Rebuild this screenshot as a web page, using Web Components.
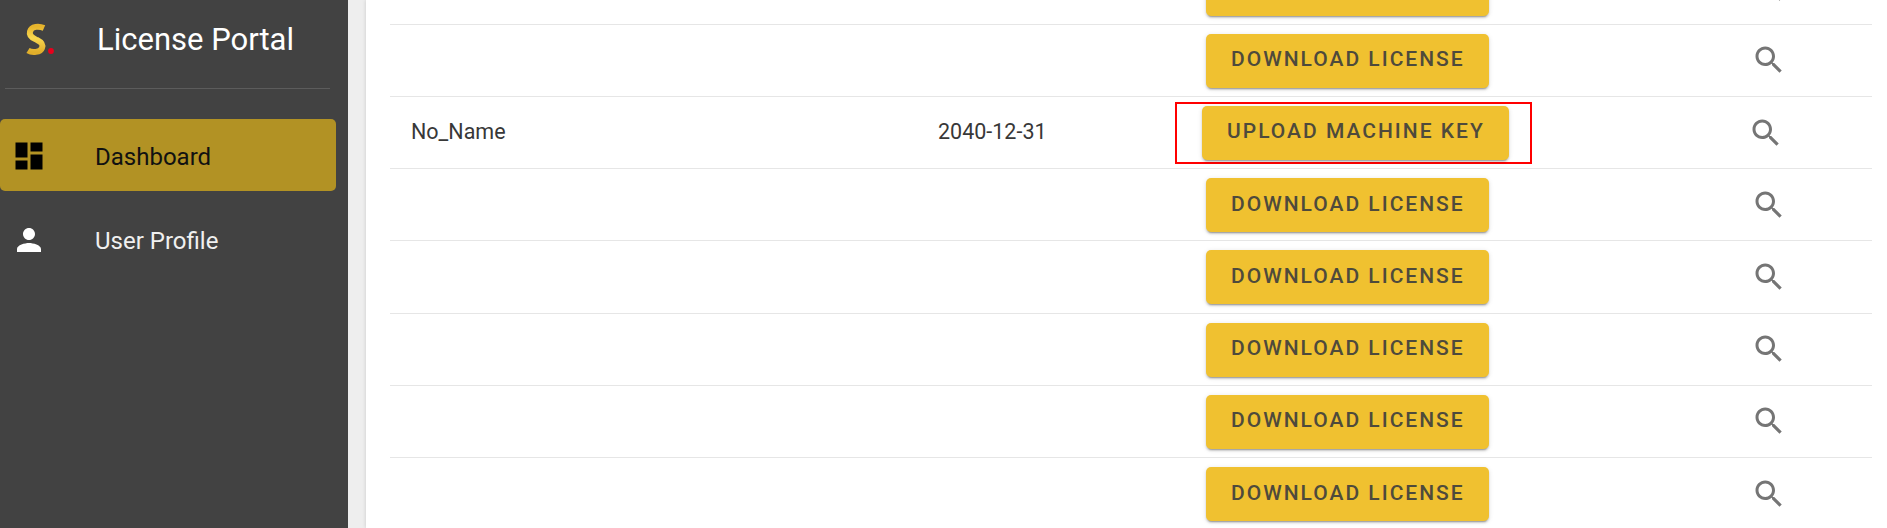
<!DOCTYPE html>
<html>
<head>
<meta charset="utf-8">
<title>License Portal</title>
<style>
  html, body { margin: 0; height: 100%; overflow: hidden; }
  body { font-family: Roboto, "Liberation Sans", sans-serif; background: #eeeeee; }
</style>
</head>
<body>
<license-app>
  <side-bar slot="side">
    <nav-item active label="Dashboard" icon="dashboard"></nav-item>
    <nav-item label="User Profile" icon="person"></nav-item>
  </side-bar>
  <license-row slot="rows" action="DOWNLOAD LICENSE"></license-row>
  <license-row slot="rows" action="DOWNLOAD LICENSE"></license-row>
  <license-row slot="rows" action="UPLOAD MACHINE KEY" name="No_Name" expires="2040-12-31" highlight></license-row>
  <license-row slot="rows" action="DOWNLOAD LICENSE"></license-row>
  <license-row slot="rows" action="DOWNLOAD LICENSE"></license-row>
  <license-row slot="rows" action="DOWNLOAD LICENSE"></license-row>
  <license-row slot="rows" action="DOWNLOAD LICENSE"></license-row>
  <license-row slot="rows" action="DOWNLOAD LICENSE"></license-row>
</license-app>

<script>
(function (customElements) {
    const ICONS = {
        dashboard: 'M3 13h8V3H3v10zm0 8h8v-6H3v6zm10 0h8V11h-8v10zm0-18v6h8V3h-8z',
        person: 'M12 12c2.21 0 4-1.79 4-4s-1.79-4-4-4-4 1.79-4 4 1.79 4 4 4zm0 2c-2.67 0-8 1.34-8 4v2h16v-2c0-2.66-5.33-4-8-4z',
        search: 'M15.5 14h-.79l-.28-.27C15.41 12.59 16 11.11 16 9.5 16 5.91 13.09 3 9.5 3S3 5.91 3 9.5 5.91 16 9.5 16c1.61 0 3.09-.59 4.23-1.57l.27.28v.79l5 4.99L20.49 19l-4.99-5zm-6 0C7.01 14 5 11.99 5 9.5S7.01 5 9.5 5 14 7.01 14 9.5 11.99 14 9.5 14z'
    };

    const svgIcon = (name, size, color) =>
        `<svg width="${size}" height="${size}" viewBox="0 0 24 24" fill="${color}" style="flex:none"><path d="${ICONS[name]}"/></svg>`;

    // Page shell: dark sidebar on the left, white card with the rows on the right.
    class LicenseApp extends HTMLElement {
        constructor() {
            super();
            this.attachShadow({ mode: 'open' });
            this.shadowRoot.innerHTML = `
      <style>
        :host { display: flex; width: 1887px; height: 528px; overflow: hidden; }
        .side { flex: 0 0 348px; }
        .main { flex: 1; padding-left: 18px; min-width: 0; }
        .card {
          display: flow-root;
          background: #fff;
          height: 100%;
          padding: 0 15px 0 24px;
          box-shadow: 0 0 4px rgba(0, 0, 0, 0.16);
        }
        /* the list is scrolled, the first row is cut by the window */
        .rows { margin-top: -47.4px; }
      </style>
      <div class="side"><slot name="side"></slot></div>
      <div class="main"><div class="card"><div class="rows"><slot name="rows"></slot></div></div></div>`;
        }
    }

    class SideBar extends HTMLElement {
        constructor() {
            super();
            this.attachShadow({ mode: 'open' });
            this.shadowRoot.innerHTML = `
      <style>
        :host { display: block; height: 528px; background: #424242; color: #fff; box-sizing: border-box; }
        .brand { display: flex; align-items: center; height: 80px; }
        .logo { flex: 0 0 97px; display: flex; padding-left: 25px; box-sizing: border-box; }
        .title { font-size: 31px; font-weight: 400; line-height: 80px; }
        hr { border: 0; height: 1px; background: #5c5c5c; margin: 8px 18px 0 5px; }
        nav { padding-top: 30px; display: flex; flex-direction: column; gap: 12px; }
      </style>
      <div class="brand">
        <div class="logo">
          <svg width="32" height="40" viewBox="0 0 32 40">
            <defs><linearGradient id="g" x1="0" y1="0" x2="0" y2="1">
              <stop offset="0" stop-color="#e6b42c"/><stop offset="0.45" stop-color="#f8d850"/><stop offset="1" stop-color="#e0ae2a"/>
            </linearGradient></defs>
            <path d="M19 8C14 5.800 6.500 6 5 11.500C3.500 17 9 18.500 12 20C16 22 18.500 24 17 28C15.500 32.500 7 33 3 30.500" fill="none" stroke="url(#g)" stroke-width="6"/>
            <circle cx="26" cy="31" r="2.900" fill="#e8001c"/>
          </svg>
        </div>
        <div class="title">License Portal</div>
      </div>
      <hr>
      <nav><slot></slot></nav>`;
        }
    }

    class NavItem extends HTMLElement {
        constructor() {
            super();
            this.attachShadow({ mode: 'open' });
        }

        connectedCallback() {
            const active = this.hasAttribute('active');
            const color = active ? '#000' : '#fff';
            this.shadowRoot.innerHTML = `
      <style>
        :host { display: block; }
        .item {
          display: flex; align-items: center; height: 72px; width: 336px;
          border-radius: 5px; color: ${active ? '#111' : '#f0f0f0'};
          background: ${active ? '#b29224' : 'transparent'};
        }
        .icon { flex: 0 0 96px; display: flex; padding: 2px 0 0 11px; box-sizing: border-box; }
        .label { font-size: 24px; font-weight: 400; line-height: 30px; padding-top: 3px; margin-left: -1px; }
      </style>
      <div class="item">
        <span class="icon">${svgIcon(this.getAttribute('icon'), 36, color)}</span>
        <span class="label">${this.getAttribute('label')}</span>
      </div>`;
        }
    }

    class LicenseButton extends HTMLElement {
        constructor() {
            super();
            this.attachShadow({ mode: 'open' });
            this.shadowRoot.innerHTML = `
      <style>
        :host { display: inline-block; }
        button {
          display: block; height: 54px; padding: 0 24px 3px 25px; border: 0; border-radius: 5px;
          background: #f0c130; color: #4e4a3c;
          font: 500 21px Roboto, sans-serif; letter-spacing: 2px; white-space: nowrap;
          box-shadow: 0 3px 1px -2px rgba(0,0,0,.2), 0 2px 2px 0 rgba(0,0,0,.14), 0 1px 5px 0 rgba(0,0,0,.12);
        }
      </style>
      <button><slot></slot></button>`;
        }
    }

    class LicenseRow extends HTMLElement {
        constructor() {
            super();
            this.attachShadow({ mode: 'open' });
        }

        connectedCallback() {
            const hl = this.hasAttribute('highlight');
            this.shadowRoot.innerHTML = `
      <style>
        :host { display: block; font-size: 21.5px; color: #383838; }
        .row {
          display: grid; grid-template-columns: 548px 237px 480px 217px;
          align-items: center; height: 72.2px; box-sizing: border-box;
          border-bottom: 1.5px solid #e6e6e6;
        }
        .name, .date { padding-bottom: 2px; }
        .name { padding-left: 21px; }
        .action { padding: ${hl ? 0 : 1}px 0 0 ${hl ? 0 : 31}px; }
        .mark { display: inline-block; ${hl ? 'border: 2px solid #f00; padding: 2px 21px 2px 25px;' : ''} }
        .mark license-button { vertical-align: top; }
        .search { display: flex; padding-left: ${hl ? 92.5 : 95.5}px; }
      </style>
      <div class="row">
        <div class="name">${this.getAttribute('name') || ''}</div>
        <div class="date">${this.getAttribute('expires') || ''}</div>
        <div class="action"><span class="mark"><license-button>${this.getAttribute('action')}</license-button></span></div>
        <div class="search">${svgIcon('search', 36, '#757575')}</div>
      </div>`;
        }
    }

    customElements.define('license-app', LicenseApp);
    customElements.define('side-bar', SideBar);
    customElements.define('nav-item', NavItem);
    customElements.define('license-button', LicenseButton);
    customElements.define('license-row', LicenseRow);
})(window.customElements);
</script>
</body>
</html>
